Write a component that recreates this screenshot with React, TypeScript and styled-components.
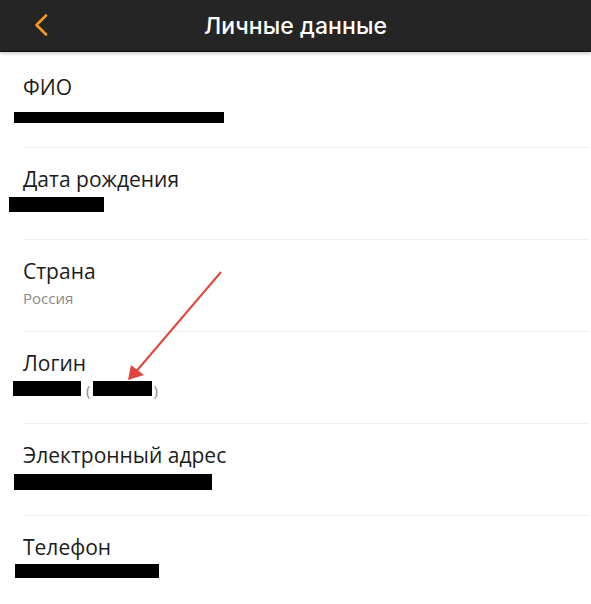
import { createGlobalStyle, styled } from "styled-components";

const Global = createGlobalStyle`
  html, body {
    margin: 0;
    padding: 0;
    background: #ffffff;
  }
  body {
    font-family: "Open Sans", "Noto Sans", sans-serif;
    overflow: hidden;
  }
`;

type Bar = { left: number; top: number; w: number; h: number };

type Field = {
  label: string;
  value?: string;
  bars?: Bar[];
  login?: boolean;
};

const fields: Field[] = [
  { label: "ФИО", bars: [{ left: -9, top: 8, w: 210, h: 11 }] },
  { label: "Дата рождения", bars: [{ left: -14, top: 1, w: 95, h: 15 }] },
  { label: "Страна", value: "Россия" },
  { label: "Логин", login: true },
  { label: "Электронный адрес", bars: [{ left: -9, top: 2, w: 198, h: 16 }] },
  { label: "Телефон", bars: [{ left: -8, top: 0, w: 144, h: 14 }] },
];

export default function App() {
  return (
    <Page>
      <Global />
      <Header>
        <Back aria-label="Назад">
          <svg width="14" height="22" viewBox="0 0 14 22">
            <polyline
              points="12,1.5 2.5,11 12,20.5"
              fill="none"
              stroke="#f39a1f"
              strokeWidth="2.6"
              strokeLinecap="round"
              strokeLinejoin="round"
            />
          </svg>
        </Back>
        <Title>Личные данные</Title>
      </Header>

      <List>
        {fields.map((f) => (
          <Row key={f.label}>
            <Label>{f.label}</Label>
            <Value>
              {f.value}
              {f.bars?.map((b, i) => (
                <Redact
                  key={i}
                  style={{ left: b.left, top: b.top, width: b.w, height: b.h }}
                />
              ))}
              {f.login && (
                <LoginLine>
                  <InlineRedact $w={68} />
                  <Paren>(</Paren>
                  <InlineRedact $w={59} />
                  <Paren>)</Paren>
                </LoginLine>
              )}
            </Value>
          </Row>
        ))}
      </List>

      <Arrow width="591" height="604" viewBox="0 0 591 604">
        <line x1="221" y1="272" x2="134" y2="374" stroke="#e2453b" strokeWidth="2" />
        <polygon points="128,380 131,365 144,375" fill="#e2453b" />
      </Arrow>
    </Page>
  );
}

const Page = styled.div`
  position: relative;
  width: 591px;
  height: 604px;
  overflow: hidden;
  background: #ffffff;
`;

const Header = styled.header`
  position: relative;
  height: 51px;
  background: #252525;
  border-bottom: 1px solid #0e0e0e;
  box-shadow: 0 2px 3px rgba(0, 0, 0, 0.18);
  display: flex;
  align-items: center;
  justify-content: center;
`;

const Back = styled.div`
  position: absolute;
  left: 34px;
  top: 14px;
  display: flex;
`;

const Title = styled.h1`
  margin: 0;
  font-family: "Inter", "Roboto", sans-serif;
  font-size: 23px;
  font-weight: 500;
  color: #ffffff;
  letter-spacing: 0.1px;
`;

const List = styled.div`
  padding-top: 4px;
  display: flex;
  flex-direction: column;
`;

const Row = styled.div`
  height: 92px;
  margin-left: 23px;
  margin-right: 2px;
  padding-top: 18px;
  box-sizing: border-box;
  border-bottom: 1px solid #efefef;
  display: flex;
  flex-direction: column;
`;

const Label = styled.div`
  font-size: 21px;
  line-height: 26px;
  color: #1c1c1c;
`;

const Value = styled.div`
  position: relative;
  margin-top: 4px;
  height: 20px;
  font-size: 15px;
  line-height: 20px;
  color: #8a8a8a;
`;

const Redact = styled.span`
  position: absolute;
  background: #000000;
`;

const LoginLine = styled.div`
  display: flex;
  align-items: center;
  margin-left: -10px;
  height: 20px;
`;

const InlineRedact = styled.span<{ $w: number }>`
  display: inline-block;
  width: ${(p) => p.$w}px;
  height: 15px;
  margin-top: -4px;
  background: #000000;
`;

const Paren = styled.span`
  color: #8a8a8a;
  font-size: 15px;
  margin: 0 3px 0 5px;
  &:last-child {
    margin: 0 0 0 1px;
  }
`;

const Arrow = styled.svg`
  position: absolute;
  left: 0;
  top: 0;
  pointer-events: none;
`;
